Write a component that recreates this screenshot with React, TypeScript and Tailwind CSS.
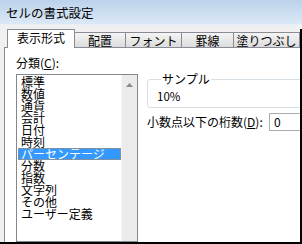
const categories = [
  "標準",
  "数値",
  "通貨",
  "会計",
  "日付",
  "時刻",
  "パーセンテージ",
  "分数",
  "指数",
  "文字列",
  "その他",
  "ユーザー定義",
];

const tabs = [
  { label: "配置", w: "w-[51px]" },
  { label: "フォント", w: "w-[56px]" },
  { label: "罫線", w: "w-[52px]" },
  { label: "塗りつぶし", w: "w-[66px]" },
];

export default function App() {
  return (
    <div
      className="w-[302px] h-[244px] flex flex-col overflow-hidden bg-[#f0f0f0] text-black text-[12px] leading-[12px]"
      style={{ fontFamily: '"Noto Sans CJK JP", "Noto Sans", sans-serif' }}
    >
      <TitleBar />
      <div className="h-[5px] shrink-0 border-t border-[#e6eef8]" />
      <div className="flex-1 flex flex-col min-h-0 border-r-2 border-b-2 border-black">
        <TabRow />
        <Panel />
      </div>
    </div>
  );
}

function TitleBar() {
  return (
    <div className="h-[24px] shrink-0 flex items-center pl-[6px] bg-gradient-to-b from-[#bcd2eb] to-[#dbe8f6]">
      <span className="text-[12.5px] leading-[13px] pt-[1px]">セルの書式設定</span>
    </div>
  );
}

function TabRow() {
  return (
    <div className="h-[18px] shrink-0 flex items-end pl-[7px]">
      <div className="relative z-10 w-[70px] h-[19px] -mb-px flex items-center justify-center bg-white border border-b-0 border-[#898c95] pb-[2px]">
        表示形式
      </div>
      {tabs.map((t) => (
        <div
          key={t.label}
          className={`${t.w} h-[15px] shrink-0 flex items-center justify-center border border-l-0 border-b-0 border-[#898c95] bg-gradient-to-b from-[#f4f4f4] to-[#dcdcdc] pt-[1px]`}
        >
          {t.label}
        </div>
      ))}
    </div>
  );
}

function Panel() {
  return (
    <div className="flex-1 ml-[4px] min-h-0 overflow-hidden bg-white border-l border-t border-[#898c95] flex pl-[11px]">
      <div className="w-[122px] shrink-0 pt-[9px] flex flex-col">
        <div>
          分類(<span className="underline">C</span>):
        </div>
        <ListBox />
      </div>
      <div className="w-[170px] shrink-0 ml-[9px] pt-[25px] flex flex-col">
        <fieldset className="border border-[#d5dfe5] rounded-[3px] pl-[9px] pb-[5px] pt-[5px]">
          <legend className="ml-[4px] px-[1px] leading-[12px]">サンプル</legend>
          <div className="leading-[12px] text-[11.5px]">10%</div>
        </fieldset>
        <div className="mt-[5px] flex items-center">
          <span className="w-[122px] shrink-0">
            小数点以下の桁数(<span className="underline">D</span>):
          </span>
          <div className="w-[60px] h-[18px] border border-[#abadb3] flex items-center pl-[4px]">0</div>
        </div>
      </div>
    </div>
  );
}

function ListBox() {
  return (
    <div className="mt-[5px] h-[172px] border border-[#828790] flex">
      <div className="flex-1 pt-[1px] pl-[1px]">
        {categories.map((c) => (
          <div
            key={c}
            className={
              c === "パーセンテージ"
                ? "h-[12px] pl-[3px] leading-[12px] bg-[#3399ff] text-white outline outline-1 outline-dotted -outline-offset-1 outline-[#c7864a]"
                : "h-[12px] pl-[3px] leading-[12px]"
            }
          >
            {c}
          </div>
        ))}
      </div>
      <div className="w-[16px] shrink-0 bg-[#ebebeb] border-l border-[#f5f5f5] flex justify-center pt-[8px]">
        <svg width="7" height="4" viewBox="0 0 7 4">
          <path d="M3.5 0 L7 4 L0 4 Z" fill="#8a8a8a" />
        </svg>
      </div>
    </div>
  );
}
